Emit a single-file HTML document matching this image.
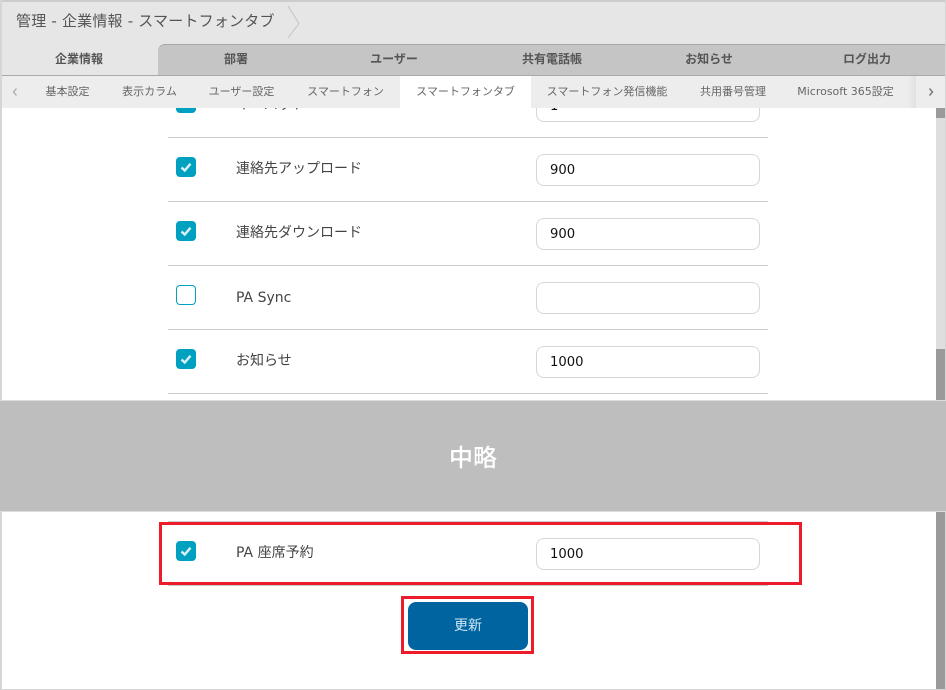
<!DOCTYPE html>
<html lang="ja"><head><meta charset="utf-8"><title>スマートフォンタブ</title>
<style>
html,body{margin:0;padding:0;width:946px;height:690px;overflow:hidden;background:#fff}
body{position:relative;font-family:"DejaVu Sans","Noto Sans CJK JP",sans-serif;color:#444}
div,span,svg{position:absolute;box-sizing:border-box}
.t{white-space:nowrap;line-height:20px;height:20px}
.main{font-size:12px;font-weight:700;color:#555;top:49px;text-align:center;transform:translateX(-50%)}
.sub{font-size:11px;color:#666;top:82px;transform:translateX(-50%)}
.line{left:168px;width:600px;height:1px;background:#ccc}
.inp{left:536px;width:224px;height:32px;border:1px solid #d6d6d6;border-radius:8px;background:#fff;font-size:13.2px;color:#111;padding-left:13px;line-height:31px}
.lab{left:236px;font-size:14px;color:#444}
.cb{left:176px;width:20px;height:20px;border-radius:4px;background:#00a0c0}
.cb.off{background:#fff;border:1px solid #00a0c0}
.cb svg{left:0;top:0}
</style></head><body>

<div style="left:0;top:0;width:946px;height:44px;background:#e6e6e6"></div>
<div style="left:0;top:0;width:946px;height:2px;background:#ccc"></div>
<div class="t" style="left:16px;top:11px;font-size:15px;letter-spacing:.2px;color:#555">管理 - 企業情報 - スマートフォンタブ</div>
<svg style="left:285px;top:5px" width="20" height="36"><path d="M3 1 L14 18.500 L3 33" fill="none" stroke="#c4c4c4" stroke-width="1"/></svg>

<div style="left:0;top:44px;width:946px;height:32px;background:#e6e6e6"></div>
<div style="left:158px;top:44px;width:788px;height:32px;background:#c5c5c5;border-top:1px solid #a6a6a6;border-top-left-radius:7px"></div>
<div style="left:0;top:75px;width:946px;height:1px;background:#a9a9a9"></div>
<div class="t main" style="left:79px">企業情報</div>
<div class="t main" style="left:236px">部署</div>
<div class="t main" style="left:394px">ユーザー</div>
<div class="t main" style="left:552px">共有電話帳</div>
<div class="t main" style="left:709px">お知らせ</div>
<div class="t main" style="left:867px">ログ出力</div>

<div style="left:0;top:76px;width:946px;height:32px;background:#ededed"></div>
<div style="left:400px;top:76px;width:131px;height:32px;background:#fff"></div>
<div style="left:908px;top:76px;width:8px;height:32px;background:linear-gradient(90deg,#ededed,#e0e0e0)"></div>
<svg style="left:11px;top:86px" width="8" height="12"><path d="M5.500 2.500 L2.500 6 L5.500 9.500" fill="none" stroke="#aaa" stroke-width="1.300"/></svg>
<div class="t sub" style="left:67.500px">基本設定</div>
<div class="t sub" style="left:149.500px">表示カラム</div>
<div class="t sub" style="left:241.500px">ユーザー設定</div>
<div class="t sub" style="left:345.500px">スマートフォン</div>
<div class="t sub" style="left:465.500px">スマートフォンタブ</div>
<div class="t sub" style="left:607px">スマートフォン発信機能</div>
<div class="t sub" style="left:733px">共用番号管理</div>
<div class="t sub" style="left:845.500px">Microsoft 365設定</div>
<svg style="left:927px;top:86px" width="10" height="12"><path d="M2.500 2.500 L5.500 6 L2.500 9.500" fill="none" stroke="#777" stroke-width="1.400"/></svg>

<!-- content clipped row -->
<div style="left:0;top:108px;width:936px;height:293px;overflow:hidden">
  <div class="cb" style="top:-15px"></div>
  <div class="t lab" style="top:-13px">キーパッド</div>
  <div class="inp" style="top:-18px">1</div>
</div>

<div class="line" style="top:137px"></div>
<div class="cb" style="top:157px"><svg width="20" height="20"><path d="M5.500 10.500 L8.700 13.500 L14.500 6.800" fill="none" stroke="#d8f4fa" stroke-width="2.400"/></svg></div>
<div class="t lab" style="top:159px">連絡先アップロード</div>
<div class="inp" style="top:154px">900</div>

<div class="line" style="top:201px"></div>
<div class="cb" style="top:221px"><svg width="20" height="20"><path d="M5.500 10.500 L8.700 13.500 L14.500 6.800" fill="none" stroke="#d8f4fa" stroke-width="2.400"/></svg></div>
<div class="t lab" style="top:223px">連絡先ダウンロード</div>
<div class="inp" style="top:218px">900</div>

<div class="line" style="top:265px"></div>
<div class="cb off" style="top:285px"></div>
<div class="t lab" style="top:288px">PA Sync</div>
<div class="inp" style="top:282px"></div>

<div class="line" style="top:329px"></div>
<div class="cb" style="top:349px"><svg width="20" height="20"><path d="M5.500 10.500 L8.700 13.500 L14.500 6.800" fill="none" stroke="#d8f4fa" stroke-width="2.400"/></svg></div>
<div class="t lab" style="top:351px">お知らせ</div>
<div class="inp" style="top:346px">1000</div>

<div class="line" style="top:393px"></div>

<!-- scrollbar -->
<div style="left:936px;top:108px;width:9px;height:293px;background:#dedede"></div>
<div style="left:936px;top:108px;width:9px;height:10px;background:#9a9a9a"></div>
<div style="left:936px;top:349px;width:9px;height:52px;background:#9a9a9a"></div>
<div style="left:936px;top:511px;width:9px;height:178px;background:#9a9a9a"></div>

<!-- last row -->
<div class="line" style="top:521px"></div>
<div class="line" style="top:585px"></div>
<div class="cb" style="top:541px"><svg width="20" height="20"><path d="M5.500 10.500 L8.700 13.500 L14.500 6.800" fill="none" stroke="#d8f4fa" stroke-width="2.400"/></svg></div>
<div class="t lab" style="top:543px">PA 座席予約</div>
<div class="inp" style="top:538px">1000</div>
<div style="left:159px;top:522px;width:643px;height:63px;border:3px solid #ed1c2b"></div>

<div style="left:408px;top:602px;width:120px;height:48px;border-radius:8px;background:#0064a0"></div>
<div class="t" style="left:408px;top:616px;width:120px;text-align:center;font-size:14px;color:#cfe6f5">更新</div>
<div style="left:401px;top:596px;width:133px;height:58px;border:3px solid #ed1c2b"></div>

<!-- outer frame -->
<div style="left:0;top:0;width:2px;height:690px;background:#d6d6d6"></div>
<div style="left:945px;top:0;width:1px;height:690px;background:#d6d6d6"></div>
<div style="left:0;top:689px;width:946px;height:1px;background:#d6d6d6"></div>

<!-- omitted band -->
<div style="left:0;top:400px;width:946px;height:112px;background:#bebebe;border-top:1px solid #dcdcdc;border-bottom:1px solid #dcdcdc"></div>
<div class="t" style="left:449px;top:446px;font-size:24px;line-height:24px;height:24px;color:#fff;font-weight:500">中略</div>
</body></html>
